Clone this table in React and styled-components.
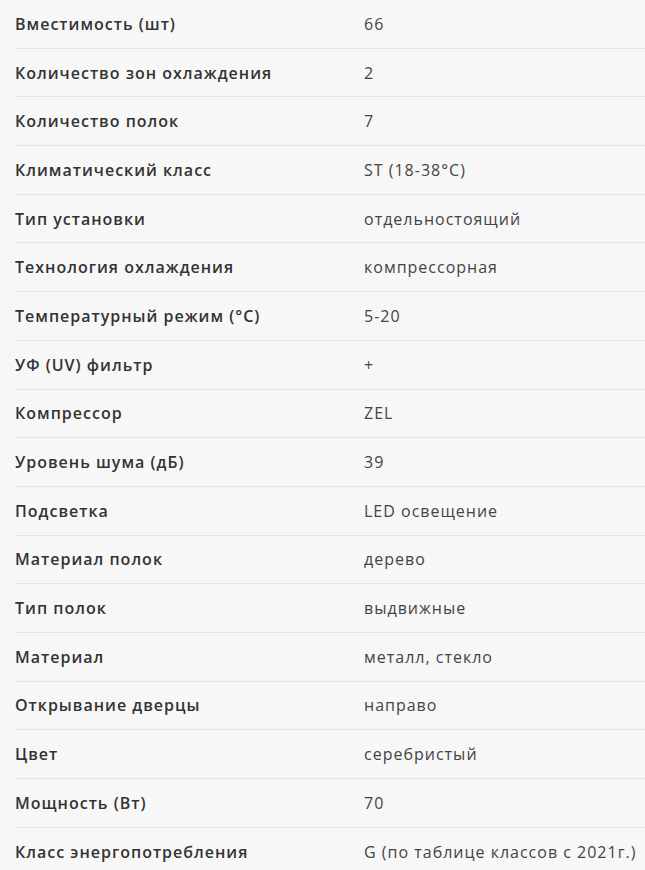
import React from 'react'
import styled, { createGlobalStyle } from 'styled-components'

const Global = createGlobalStyle`
	html, body {
		margin: 0;
		padding: 0;
		background: #f7f7f7;
	}
	body {
		font-family: "Open Sans", "Noto Sans", sans-serif;
	}
`
const Table = styled.div`
	width: 645px;
	padding-left: 15px;
	box-sizing: border-box;
	overflow: hidden;
`
const Row = styled.div`
	display: grid;
	grid-template-columns: 349px 1fr;
	align-items: center;
	height: 48.7px;
	box-sizing: border-box;
	border-bottom: ${props => props.last ? 'none' : '1px solid #e5e5e5'};
`
const Label = styled.div`
	font-size: 16px;
	font-weight: 600;
	letter-spacing: 1px;
	color: #333;
	white-space: nowrap;
`
const Value = styled.div`
	font-size: 16px;
	letter-spacing: 1px;
	color: #444;
	white-space: nowrap;
`

const specs = [
	['Вместимость (шт)', '66'],
	['Количество зон охлаждения', '2'],
	['Количество полок', '7'],
	['Климатический класс', 'ST (18-38°C)'],
	['Тип установки', 'отдельностоящий'],
	['Технология охлаждения', 'компрессорная'],
	['Температурный режим (°C)', '5-20'],
	['УФ (UV) фильтр', '+'],
	['Компрессор', 'ZEL'],
	['Уровень шума (дБ)', '39'],
	['Подсветка', 'LED освещение'],
	['Материал полок', 'дерево'],
	['Тип полок', 'выдвижные'],
	['Материал', 'металл, стекло'],
	['Открывание дверцы', 'направо'],
	['Цвет', 'серебристый'],
	['Мощность (Вт)', '70'],
	['Класс энергопотребления', 'G (по таблице классов с 2021г.)'],
]

export default function App() {
	return (
		<>
			<Global />
			<Table>
				{specs.map(([name, value], i) => (
					<Row key={name} last={i === specs.length - 1}>
						<Label>{name}</Label>
						<Value>{value}</Value>
					</Row>
				))}
			</Table>
		</>
	)
}
